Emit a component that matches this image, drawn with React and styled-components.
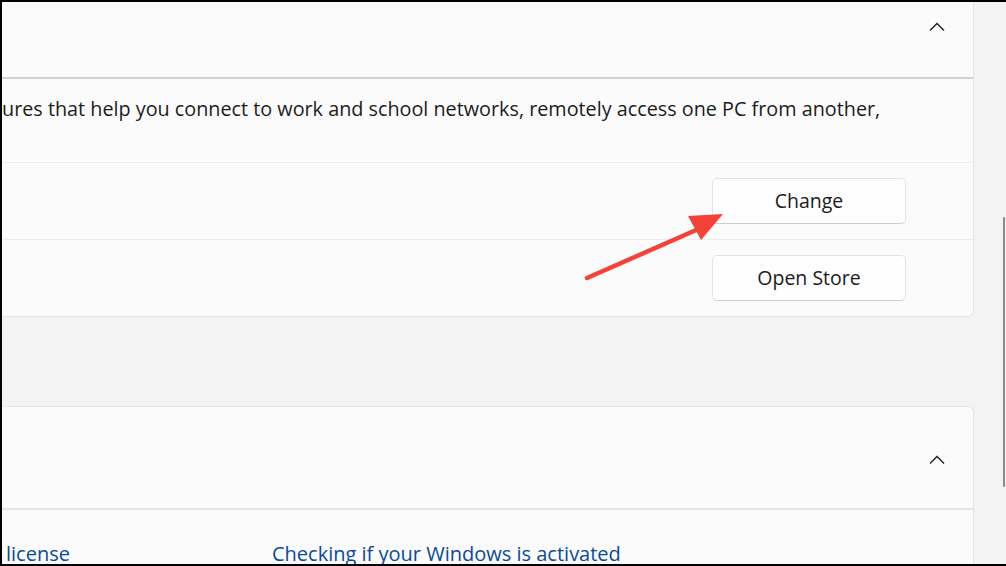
import React from 'react';
import styled, { createGlobalStyle } from 'styled-components';

const GlobalStyle = createGlobalStyle`
  html, body {
    margin: 0;
    padding: 0;
    background: #f3f3f3;
    overflow: hidden;
  }
  * { box-sizing: border-box; }
`;

const Frame = styled.div`
  position: relative;
  width: 1006px;
  height: 566px;
  display: flex;
  border-top: 2px solid #000;
  border-left: 2px solid #000;
  border-bottom: 2px solid #000;
  background: #f3f3f3;
  overflow: hidden;
  font-family: "Open Sans", "Noto Sans", sans-serif;
  color: #1b1b1b;
`;

const Main = styled.div`
  flex: 1;
  display: flex;
  flex-direction: column;
  padding-right: 29px;
  min-width: 0;
`;

const ScrollTrack = styled.div`
  width: 3px;
  display: flex;
  flex-direction: column;
`;

const ScrollThumb = styled.div`
  margin-top: 215px;
  height: 270px;
  width: 2px;
  background: #8a8a8a;
  border-radius: 1px;
`;

const Card = styled.section`
  background: #fbfbfb;
  border: 1px solid #e5e5e5;
  border-left: none;
  border-top: ${p => (p.$cutTop ? 'none' : '1px solid #e5e5e5')};
  border-bottom: ${p => (p.$cutBottom ? 'none' : '1px solid #e5e5e5')};
  border-radius: ${p => (p.$cutTop ? '0 0 6px 0' : '0 6px 0 0')};
  margin-top: ${p => p.$gap || 0}px;
`;

const Header = styled.div`
  height: ${p => p.$h}px;
  display: flex;
  justify-content: flex-end;
  align-items: flex-start;
  padding: ${p => p.$pt}px 28px 0 0;
  border-bottom: 2px solid ${p => p.$line};
`;

const Chevron = () => (
  <svg width="16" height="10" viewBox="0 0 16 10">
    <path d="M1 8.5 L8 1.5 L15 8.5" fill="none" stroke="#1b1b1b" strokeWidth="1.3" />
  </svg>
);

const Description = styled.p`
  margin: 0;
  height: 84px;
  padding-top: 16px;
  font-size: 19.8px;
  line-height: 28px;
  white-space: nowrap;
  border-bottom: 1px solid #ececec;
`;

const Row = styled.div`
  height: ${p => p.$h}px;
  display: flex;
  align-items: center;
  justify-content: flex-end;
  padding-right: 67px;
  border-bottom: ${p => (p.$last ? 'none' : '1px solid #ececec')};
`;

const Button = styled.button`
  width: 194px;
  height: 46px;
  background: #fefefe;
  border: 1px solid #e3e3e3;
  border-bottom-color: #cdcdcd;
  border-radius: 5px;
  font-family: inherit;
  font-size: 19.5px;
  color: #1b1b1b;
  padding: 0 0 2px;
`;

const Links = styled.div`
  display: flex;
  padding: 30px 0 0 4px;
`;

const Link = styled.a`
  color: #0a4a9c;
  font-size: 20px;
  line-height: 28px;
  width: ${p => p.$w}px;
  text-decoration: none;
`;

const Arrow = styled.svg`
  position: absolute;
  left: -2px;
  top: -2px;
  pointer-events: none;
`;

export default function App() {
  return (
    <Frame>
      <GlobalStyle />
      <Main>
        <Card $cutTop>
          <Header $h={77} $pt={20} $line="#d2d2d2">
            <Chevron />
          </Header>
          <Description>
            ures that help you connect to work and school networks, remotely access one PC from another,
          </Description>
          <Row $h={77}>
            <Button>Change</Button>
          </Row>
          <Row $h={76} $last>
            <Button>Open Store</Button>
          </Row>
        </Card>
        <Card $gap={89} $cutBottom>
          <Header $h={103} $pt={48} $line="#e5e5e5">
            <Chevron />
          </Header>
          <Links>
            <Link $w={266}>license</Link>
            <Link>Checking if your Windows is activated</Link>
          </Links>
        </Card>
      </Main>
      <ScrollTrack>
        <ScrollThumb />
      </ScrollTrack>
      <Arrow width="1006" height="566" viewBox="0 0 1006 566">
        <line x1="587" y1="278" x2="703" y2="227" stroke="#f44336" strokeWidth="4.5" strokeLinecap="round" />
        <polygon points="723,214 688,216 701,240" fill="#f44336" />
      </Arrow>
    </Frame>
  );
}
